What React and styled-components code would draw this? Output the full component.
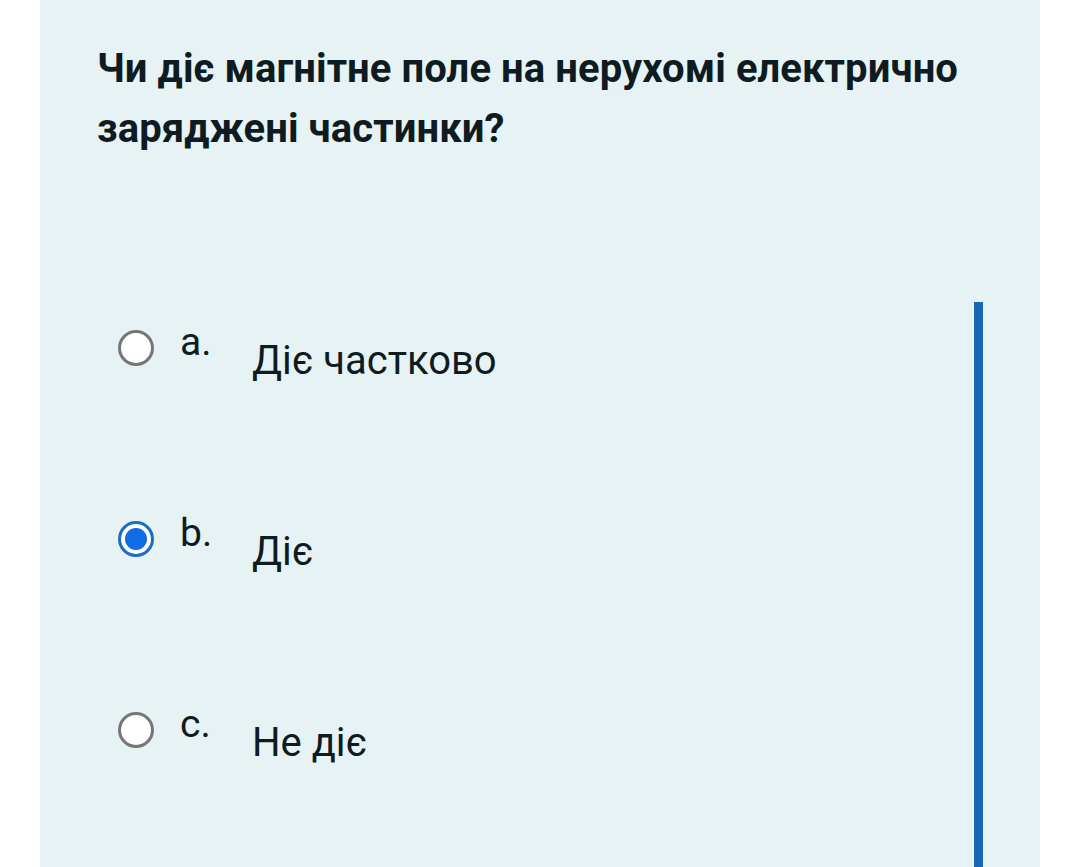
import React from 'react'
import styled, { createGlobalStyle } from 'styled-components'

const GlobalStyle = createGlobalStyle`
    html, body {
        margin: 0;
        padding: 0;
        background: #ffffff;
    }
    body {
        font-family: Roboto, "Noto Sans", sans-serif;
        color: #0e1c22;
    }
`

const Page = styled.div`
    height: 867px;
    overflow: hidden;
`

const Panel = styled.div`
    margin-left: 40px;
    width: 1000px;
    height: 867px;
    box-sizing: border-box;
    background: #e7f2f5;
    padding: 39px 57px 0 57px;
    display: flex;
    flex-direction: column;
`

const Question = styled.h2`
    margin: 0;
    font-size: 40px;
    line-height: 60px;
    font-weight: 700;
    letter-spacing: 0.08px;
    color: #0e1c22;
`

const Answers = styled.div`
    flex: 1;
    margin-top: 143px;
    padding-top: 18px;
    border-right: 9px solid #1a67b5;
    display: flex;
    flex-direction: column;
`

const Row = styled.label`
    display: flex;
    align-items: flex-start;
    flex: none;
    height: 191px;
    padding-left: 21px;
`

const Radio = styled.span`
    position: relative;
    flex: none;
    width: 36px;
    height: 36px;
    margin-top: 10px;
    box-sizing: border-box;
    border-radius: 50%;
    background: #ffffff;
    border: 3px solid ${p => (p.checked ? '#1d6ec2' : '#767676')};

    &::after {
        content: "";
        display: ${p => (p.checked ? 'block' : 'none')};
        position: absolute;
        top: 4px;
        left: 4px;
        width: 22px;
        height: 22px;
        border-radius: 50%;
        background: #0f6ce6;
    }
`

const Letter = styled.span`
    width: 72px;
    margin-left: 26px;
    font-size: 39px;
    line-height: 44px;
    color: #0e1c22;
`

const AnswerText = styled.span`
    margin-top: 18px;
    font-size: 40px;
    line-height: 46px;
    color: #0e1c22;
`

const OPTIONS = [
    { letter: 'a.', text: 'Діє частково', checked: false },
    { letter: 'b.', text: 'Діє', checked: true },
    { letter: 'c.', text: 'Не діє', checked: false },
]

export default function App() {
    return (
        <Page>
            <GlobalStyle />
            <Panel>
                <Question>
                    Чи діє магнітне поле на нерухомі електрично
                    <br />
                    заряджені частинки?
                </Question>
                <Answers>
                    {OPTIONS.map(opt => (
                        <Row key={opt.letter}>
                            <Radio checked={opt.checked} />
                            <Letter>{opt.letter}</Letter>
                            <AnswerText>{opt.text}</AnswerText>
                        </Row>
                    ))}
                </Answers>
            </Panel>
        </Page>
    )
}
